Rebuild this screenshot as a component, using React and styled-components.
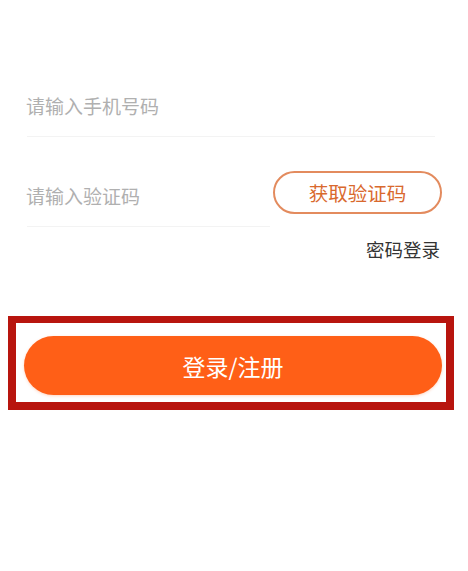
import React, { useState } from "react";
import styled, { createGlobalStyle } from "styled-components";

const GlobalStyle = createGlobalStyle`
  html, body {
    margin: 0;
    padding: 0;
    background: #ffffff;
    font-family: "Noto Sans CJK SC", "Noto Sans", sans-serif;
  }
`;

export default function App() {
    const [phone, setPhone] = useState('');
    const [code, setCode] = useState('');

    return (
        <Page>
            <GlobalStyle />
            <Form>
                <FieldRow $first $lineRight={7}>
                    <Input
                        value={phone}
                        onChange={(e) => setPhone(e.target.value)}
                        placeholder="请输入手机号码"
                    />
                </FieldRow>
                <FieldRow $lineRight={172}>
                    <Input
                        value={code}
                        onChange={(e) => setCode(e.target.value)}
                        placeholder="请输入验证码"
                    />
                    <CodeButton type="button">获取验证码</CodeButton>
                </FieldRow>
                <SwitchRow>
                    <SwitchLink>密码登录</SwitchLink>
                </SwitchRow>
            </Form>
            {/* 标注框 */}
            <Highlight>
                <SubmitButton type="button">登录/注册</SubmitButton>
            </Highlight>
        </Page>
    );
}

const Page = styled.div`
    width: 468px;
    min-height: 571px;
    background: #fff;
`;

const Form = styled.section`
    display: flex;
    flex-direction: column;
    padding: 0 26px;
`;

const FieldRow = styled.div`
    position: relative;
    display: flex;
    align-items: center;
    justify-content: space-between;
    height: 62px;
    margin-top: ${(p) => (p.$first ? '74px' : '28px')};

    &::after {
        content: '';
        position: absolute;
        left: 1px;
        right: ${(p) => p.$lineRight}px;
        bottom: -1px;
        height: 1px;
        background: #f3f3f3;
    }
`;

const Input = styled.input`
    flex: 1;
    min-width: 0;
    border: none;
    outline: none;
    background: transparent;
    padding: 0;
    font-family: inherit;
    font-size: 19px;
    color: #333;

    &::placeholder {
        color: #b0b0b0;
    }
`;

const CodeButton = styled.button`
    width: 169px;
    height: 43px;
    margin-top: -5px;
    border: 2px solid #e38b5e;
    border-radius: 22px;
    background: #fff;
    color: #d9692e;
    font-family: inherit;
    font-size: 19.5px;
    padding: 0;
`;

const SwitchRow = styled.div`
    display: flex;
    justify-content: flex-end;
    margin-top: 10px;
    padding-right: 2px;
`;

const SwitchLink = styled.span`
    font-size: 18.5px;
    line-height: 26px;
    color: #333;
`;

const Highlight = styled.div`
    box-sizing: border-box;
    width: 446px;
    margin: 54px 0 0 8px;
    padding: 13px 4px 7px 8px;
    border: 8px solid #b8150e;
    border-top-width: 7px;
`;

const SubmitButton = styled.button`
    display: block;
    width: 100%;
    height: 59px;
    border: none;
    border-radius: 30px;
    background: #ff5f17;
    box-shadow: 0 1px 3px rgba(255, 95, 23, 0.25);
    color: #fff;
    font-family: inherit;
    font-size: 23px;
    padding: 0;
`;
